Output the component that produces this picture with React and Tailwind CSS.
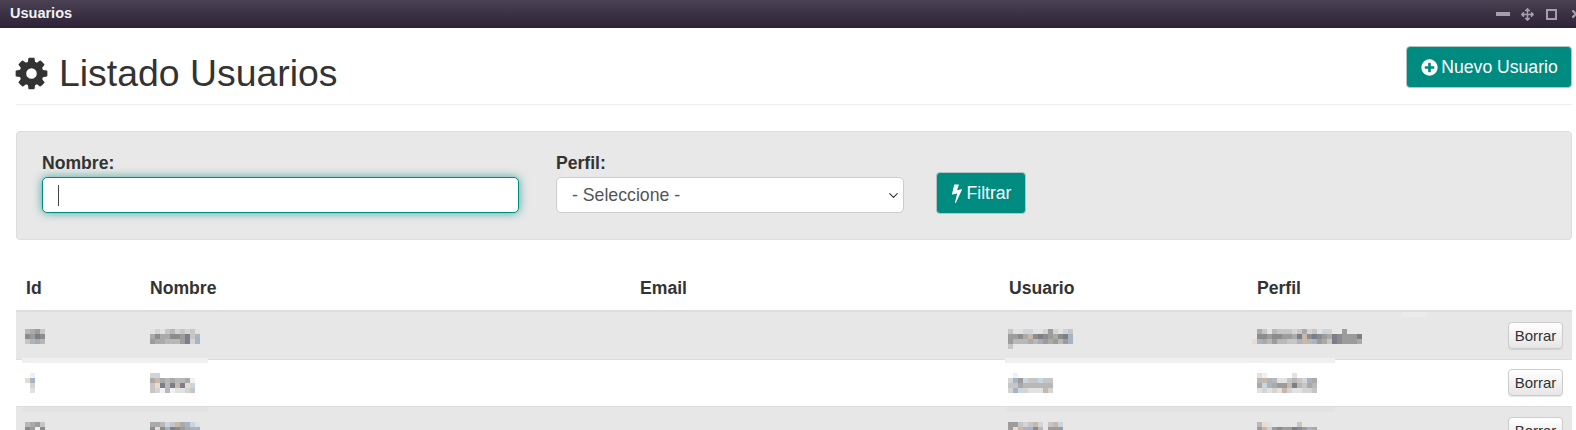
import { FaArrowsAlt, FaTimes } from "react-icons/fa";
import { ChevronDown } from "lucide-react";

// shades used by the pixelated (redacted) cells
const shades = {
    a: "#f1f1f1", b: "#e2e2e2", c: "#d4d4d4", d: "#c6c6c6", e: "#b8b8b8", f: "#aaaaaa",
    g: "#9c9c9c", h: "#8c8c8c", t: "#e8dccf", u: "#a8b4c2", v: "#cbd5e0", w: "#7d7f88", n: "#c9b8a8",
};

function Mosaic({ rows }) {
    const width = Math.max(...rows.map(r => r.length)) * 5;
    return (
        <svg width={width} height={rows.length * 5} shapeRendering="crispEdges" className="block">
            {rows.map((row, y) =>
                row.split("").map((c, x) =>
                    shades[c] ? <rect key={`${x}-${y}`} x={x * 5} y={y * 5} width="5" height="5" fill={shades[c]} /> : null
                )
            )}
        </svg>
    );
}

function Fa({ size, d, className }) {
    return (
        <svg width={size} height={size} viewBox="0 0 1792 1792" fill="currentColor" className={className}>
            <path d={d} />
        </svg>
    );
}

const cog = "M1152 896q0-106-75-181t-181-75-181 75-75 181 75 181 181 75 181-75 75-181zm512-109v222q0 12-8 23t-20 13l-185 28q-19 54-39 91 35 50 107 138 10 12 10 25t-9 23q-27 37-99 108t-94 71q-12 0-26-9l-138-108q-44 23-91 38-16 136-29 186-7 28-36 28h-222q-14 0-24.5-8.5t-11.5-21.5l-28-184q-49-16-90-37l-141 107q-10 9-25 9-14 0-25-11-126-114-165-168-7-10-7-23 0-12 8-23 15-21 51-66.5t54-70.5q-27-50-41-99l-183-27q-13-2-21-12.5t-8-23.5v-222q0-12 8-23t19-13l186-28q14-46 39-92-40-57-107-138-10-12-10-24 0-10 9-23 26-36 98.5-107.5t94.5-71.5q13 0 26 10l138 107q44-23 91-38 16-136 29-186 7-28 36-28h222q14 0 24.5 8.5t11.5 21.5l28 184q49 16 90 37l142-107q9-9 24-9 13 0 25 10 129 119 165 170 7 8 7 22 0 12-8 23-15 21-51 66.5t-54 70.5q26 50 41 98l183 28q13 2 21 12.5t8 23.5z";
const plusCircle = "M1344 960v-128q0-26-19-45t-45-19h-256v-256q0-26-19-45t-45-19h-128q-26 0-45 19t-19 45v256h-256q-26 0-45 19t-19 45v128q0 26 19 45t45 19h256v256q0 26 19 45t45 19h128q26 0 45-19t19-45v-256h256q26 0 45-19t19-45zm320-64q0 209-103 385.5t-279.5 279.5-385.5 103-385.5-103-279.5-279.5-103-385.5 103-385.5 279.5-279.5 385.5-103 385.5 103 279.5 279.5 103 385.5z";
const bolt = "M1333 566q18 20 7 44l-540 1157q-13 25-42 25-4 0-14-2-17-5-25.5-19t-4.5-30l197-808-406 101q-4 1-12 1-18 0-31-11-18-15-13-39l201-825q4-14 16-23t28-9h328q19 0 32 12.5t13 29.5q0 8-5 18l-171 463 396-98q8-2 12-2 19 0 34 15z";

const users = [
    {
        id: ["efgd", "hgwh", "dufe"],
        nombre: ["bcbdecdcdb", "fhffhhgwdu", "gffeeegwcu"],
        usuario: ["dbbcvbbcgcbvd", "gghfnhwhgfhwu", "geeefefgfgegu", "d............"],
        perfil: [".fdbedddcdfcdbvc..g", ".hhghhggfwnhwhgfwhgggw", "tufegeedduneugfdwhgggf"],
        height: "h-[48px]",
        pad: "pt-[17px]",
        bg: "bg-[#e7e7e7]",
        band: null,
    },
    {
        id: [".a", "tu", ".c", ".b"],
        nombre: ["cv........", "fnfefeefa.", "dtwewnwtv.", "dcaeabbcd."],
        usuario: [".a.......", "cugvddvdd", "ddfeeeeee", "cuvcbbbnc"],
        perfil: [".ba.....b....", ".enuebbdedcuf", ".fvufggnwedfe", ".bcbcbncbbccd"],
        height: "h-[47px]",
        pad: "pt-[13px]",
        bg: "bg-white",
        band: "top-[-2px] bg-[#f0f0f0]",
    },
    {
        id: ["efgd", "hgah"],
        nombre: ["ffevdnfuvb", "hthuwhgfuu"],
        usuario: ["ggdcdnc.dnv", "gtnuuhe.ggg"],
        perfil: [".etb.....d...", ".gnvghggwhguf"],
        height: "h-[48px]",
        pad: "pt-[15px]",
        bg: "bg-[#e7e7e7]",
        band: "top-0 bg-[#e3e3e3]",
    },
];

function Borrar() {
    return (
        <button className="h-[27px] w-[55px] rounded-[4px] border border-[#ccc] bg-gradient-to-b from-white to-[#e6e6e6] text-[15px] leading-none text-[#333] shadow-[0_1px_1px_rgba(0,0,0,0.1)]">
            Borrar
        </button>
    );
}

export default function App() {
    return (
        <div className="h-[430px] overflow-hidden bg-white font-['Liberation_Sans',Arial,sans-serif] text-[#333]">
            <div className="flex h-7 items-center justify-between overflow-hidden bg-gradient-to-b from-[#4a4153] to-[#2c2337] pl-2.5 text-[14.5px] font-bold text-[#f2f2f2]">
                <span>Usuarios</span>
                <div className="mr-[-6px] flex items-center gap-[11px] text-[#a49fab]">
                    <span className="h-[4px] w-[14px] bg-[#a49fab]"></span>
                    <FaArrowsAlt size={13} />
                    <span className="ml-[1px] h-[11px] w-[11px] border-2 border-[#a49fab]"></span>
                    <FaTimes size={12} className="ml-[2px]" />
                </div>
            </div>

            <div className="pl-4 pr-1">
                <div className="flex h-[77px] items-start justify-between border-b border-[#eee] pt-[18px]">
                    <h1 className="flex items-center text-[37.4px] leading-[55px]">
                        <Fa size={37} d={cog} className="ml-[-3px] mr-[9px]" />
                        Listado Usuarios
                    </h1>
                    <button className="flex h-[42px] w-[166px] items-center justify-center gap-[2px] rounded-[4px] border border-[#b5c4c2] bg-[#008b80] text-[17.6px] text-white">
                        <Fa size={19} d={plusCircle} />
                        Nuevo Usuario
                    </button>
                </div>

                <div className="mt-[26px] flex h-[109px] items-start rounded-[4px] border border-[#ddd] bg-[#e8e8e8] pl-[25px] pt-5">
                    <div className="w-[477px]">
                        <label className="mb-[3px] block text-[17.6px] font-bold leading-[22px]">Nombre:</label>
                        <div className="relative">
                            <input className="block h-[36px] w-full rounded-[5px] border border-[#008b80] bg-white shadow-[0_0_10px_rgba(0,139,128,0.7)] outline-none" />
                            <span className="absolute left-4 top-2 h-[21px] w-px bg-[#444]"></span>
                        </div>
                    </div>
                    <div className="ml-[37px] w-[348px]">
                        <label className="mb-[3px] block text-[17.6px] font-bold leading-[22px]">Perfil:</label>
                        <div className="relative">
                            <select className="block h-[36px] w-full appearance-none rounded-[5px] border border-[#ccc] bg-white pl-[15px] text-[17.7px] text-[#555] outline-none">
                                <option>- Seleccione -</option>
                            </select>
                            <ChevronDown size={15} strokeWidth={1.8} className="absolute right-[3px] top-[11px] text-[#333]" />
                        </div>
                    </div>
                    <button className="ml-8 mt-5 flex h-[42px] w-[90px] items-center justify-center rounded-[4px] border border-[#b5c4c2] bg-[#008b80] text-[17.6px] text-white">
                        <Fa size={20} d={bolt} className="ml-[-4px]" />
                        Filtrar
                    </button>
                </div>

                <table className="mt-[25px] w-full table-fixed border-collapse text-left text-[17.6px]">
                    <colgroup>
                        <col className="w-[124px]" />
                        <col className="w-[490px]" />
                        <col className="w-[369px]" />
                        <col className="w-[248px]" />
                        <col />
                        <col className="w-[80px]" />
                    </colgroup>
                    <thead>
                        <tr className="h-[46px] border-b-2 border-[#ddd]">
                            <th className="pl-2.5 pt-[2px]">Id</th>
                            <th className="pl-2.5 pt-[2px]">Nombre</th>
                            <th className="pl-2.5 pt-[2px]">Email</th>
                            <th className="pl-2.5 pt-[2px]">Usuario</th>
                            <th className="pl-2.5 pt-[2px]">Perfil</th>
                            <th></th>
                        </tr>
                    </thead>
                    <tbody>
                        {users.map((u, i) => (
                            <tr key={i} className={`border-b border-[#ddd] ${u.height} ${u.bg}`}>
                                <td className={`pl-[9px] align-top ${u.pad}`}><Mosaic rows={u.id} /></td>
                                <td className={`relative pl-[10px] align-top ${u.pad}`}>
                                    <Mosaic rows={u.nombre} />
                                    {u.band && <span className={`absolute left-[-118px] h-[5px] w-[186px] ${u.band}`}></span>}
                                </td>
                                <td></td>
                                <td className={`relative pl-[9px] align-top ${u.pad}`}>
                                    <Mosaic rows={u.usuario} />
                                    {u.band && <span className={`absolute left-[6px] h-[5px] w-[330px] ${u.band}`}></span>}
                                </td>
                                <td className={`relative pl-[5px] align-top ${u.pad}`}>
                                    <Mosaic rows={u.perfil} />
                                    {i === 0 && <span className="absolute left-[155px] top-0 h-[5px] w-[25px] bg-[#ebebeb]"></span>}
                                </td>
                                <td className="pr-[9px] text-right"><Borrar /></td>
                            </tr>
                        ))}
                    </tbody>
                </table>
            </div>
        </div>
    );
}
